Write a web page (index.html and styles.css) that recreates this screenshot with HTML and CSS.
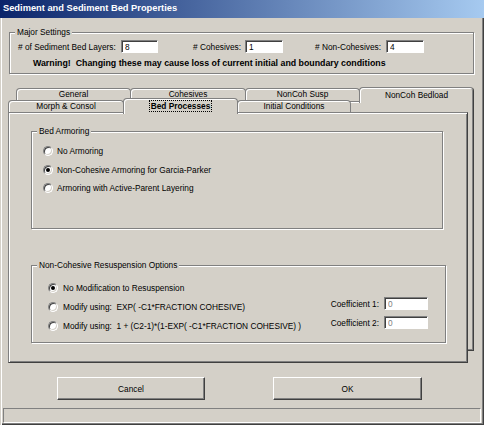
FILE: index.html
```html
<!DOCTYPE html>
<html lang="en">
<head>
    <meta charset="UTF-8">
    <title>Sediment and Sediment Bed Properties</title>
    <link rel="stylesheet" href="styles.css">
</head>
<body>
    <div class="window">
        <div class="titlebar">Sediment and Sediment Bed Properties</div>

        <div class="group major">
            <span class="group-title">Major Settings</span>
            <div class="settings-row">
                <span class="lbl lbl-layers"># of Sediment Bed Layers:</span>
                <input class="edit edit-layers" type="text" value="8">
                <span class="lbl lbl-coh"># Cohesives:</span>
                <input class="edit edit-coh" type="text" value="1">
                <span class="lbl lbl-noncoh"># Non-Cohesives:</span>
                <input class="edit edit-noncoh" type="text" value="4">
            </div>
            <div class="warning">Warning!&nbsp; Changing these may cause loss of current initial and boundary conditions</div>
        </div>

        <div class="tabs">
            <div class="tab-row back">
                <div class="tab t-general">General</div>
                <div class="tab t-coh">Cohesives</div>
                <div class="tab t-susp">NonCoh Susp</div>
                <div class="tab t-bedload">NonCoh Bedload</div>
            </div>
            <div class="tab-row front">
                <div class="tab t-morph">Morph &amp; Consol</div>
                <div class="tab t-bedproc active"><span class="focus">Bed Processes</span></div>
                <div class="tab t-init">Initial Conditions</div>
            </div>

            <div class="page">
                <div class="group armoring">
                    <span class="group-title">Bed Armoring</span>
                    <div class="option"><span class="radio"></span>No Armoring</div>
                    <div class="option"><span class="radio checked"></span>Non-Cohesive Armoring for Garcia-Parker</div>
                    <div class="option"><span class="radio"></span>Armoring with Active-Parent Layering</div>
                </div>

                <div class="group resusp">
                    <span class="group-title">Non-Cohesive Resuspension Options</span>
                    <div class="option"><span class="radio checked"></span>No Modification to Resuspension</div>
                    <div class="option">
                        <span class="radio"></span>Modify using:&nbsp; EXP( -C1*FRACTION COHESIVE)
                        <span class="coef"><span class="coef-lbl">Coefficient 1:</span><input class="edit edit-coef" type="text" value="0" disabled></span>
                    </div>
                    <div class="option">
                        <span class="radio"></span>Modify using:&nbsp; 1 + (C2-1)*(1-EXP( -C1*FRACTION COHESIVE) )
                        <span class="coef"><span class="coef-lbl">Coefficient 2:</span><input class="edit edit-coef" type="text" value="0" disabled></span>
                    </div>
                </div>
            </div>
        </div>

        <div class="buttons">
            <button class="btn btn-cancel">Cancel</button>
            <button class="btn btn-ok">OK</button>
        </div>

        <div class="statusbar"></div>
    </div>
</body>
</html>
```

FILE: styles.css
```css
* {
    box-sizing: border-box;
}
body {
    margin: 0;
    background-color: #d4d0c8;
    font-family: "Liberation Sans", Arial, sans-serif;
    font-size: 8.3px;
    color: #000;
}
.window {
    width: 484px;
    height: 425px;
    background-color: #d4d0c8;
    overflow: hidden;
    box-shadow: inset 1px 0 0 #d4d0c8, inset 2px 0 0 #fff, inset -1px -1px 0 #404040, inset -2px -2px 0 #808080;
}
.titlebar {
    height: 18px;
    padding-left: 3px;
    line-height: 17px;
    font-size: 9.3px;
    font-weight: bold;
    color: #fff;
    background: linear-gradient(to right, #0a246a, #a6caf0);
}

/* etched group boxes */
.group {
    position: relative;
    border: 1px solid #808080;
    box-shadow: 1px 1px 0 #fff, inset 1px 1px 0 #fff;
}
.group-title {
    position: absolute;
    top: -6px;
    left: 5px;
    padding: 0 2px;
    line-height: 10px;
    white-space: nowrap;
    background-color: #d4d0c8;
}
.major {
    margin: 14px 10px 0 9px;
    height: 42px;
}
.settings-row {
    display: flex;
    align-items: center;
    height: 13px;
    margin-top: 7px;
    padding-left: 8px;
}
.lbl {
    flex-shrink: 0;
    white-space: nowrap;
}
.lbl-layers { width: 103px; }
.lbl-coh { width: 52px; margin-left: 35px; }
.lbl-noncoh { width: 71px; margin-left: 32px; }
.edit {
    flex-shrink: 0;
    height: 13px;
    padding: 0 0 0 3px;
    border: 1px solid;
    border-color: #808080 #fff #fff #808080;
    box-shadow: inset 1px 1px 0 #404040;
    background-color: #fff;
    font: inherit;
    color: #000;
    outline: none;
}
.edit-layers { width: 37px; }
.edit-coh { width: 38px; }
.edit-noncoh { width: 38px; }
.warning {
    margin-top: 5px;
    padding-left: 23px;
    line-height: 10px;
    font-size: 8.8px;
    font-weight: bold;
    white-space: nowrap;
}

/* tab control */
.tabs {
    position: relative;
    margin: 13px 10px 0 8px;
    height: 276px;
}
.tabs::before {
    content: '';
    position: absolute;
    left: 8px;
    top: 14px;
    right: 0;
    bottom: 12px;
    border: 1px solid #808080;
    border-right-color: #404040;
    border-bottom-color: #404040;
    box-shadow: inset 1px 1px 0 #fff, inset -1px -1px 0 #808080;
}
.tab-row {
    position: relative;
    display: flex;
}
.tab-row.back {
    height: 14px;
    padding-left: 8px;
}
.tab-row.front {
    z-index: 2;
    height: 12px;
    margin-top: -1px;
}
.tab {
    position: relative;
    flex-shrink: 0;
    height: 13px;
    margin-right: -1px;
    border: 1px solid #808080;
    border-bottom: none;
    border-radius: 4px 4px 0 0;
    box-shadow: inset 1px 1px 0 #fff;
    background-color: #d4d0c8;
    text-align: center;
    line-height: 11px;
    white-space: nowrap;
}
.back .tab { margin-top: 1px; }
.t-general { width: 115px; }
.t-coh { width: 116px; }
.t-susp { width: 115px; }
.t-bedload {
    z-index: 1;
    width: 115px;
    height: 16px;
    line-height: 14px;
    border-right-color: #404040;
    box-shadow: inset 1px 1px 0 #fff, inset -1px 0 0 #808080;
}
.back .t-bedload { margin-top: 0; }
.t-morph { width: 116px; }
.t-bedproc { width: 115px; }
.t-init { width: 114px; }
.front .tab { height: 12px; line-height: 11px; }
.front .tab.active {
    z-index: 3;
    height: 16px;
    margin-top: -2px;
    padding-top: 2px;
    font-weight: bold;
}
.focus {
    padding: 0 1px;
    border: 1px dotted #000;
}
.page {
    position: relative;
    z-index: 1;
    width: 460px;
    height: 251px;
    padding-top: 1px;
    border: 1px solid #808080;
    border-right: 1px solid #404040;
    border-bottom: 1px solid #404040;
    box-shadow: inset 1px 1px 0 #fff, inset -1px -1px 0 #808080;
    background-color: #d4d0c8;
    overflow: hidden;
}

/* option groups on the page */
.armoring {
    width: 412px;
    height: 98px;
    margin: 17px 0 0 22px;
    padding: 10px 0 0 11px;
}
.resusp {
    width: 415px;
    height: 78px;
    margin: 36px 0 0 22px;
    padding: 12px 17px 0 16px;
}
.option {
    display: flex;
    align-items: center;
    height: 18.5px;
    white-space: nowrap;
}
.resusp .option { height: 19px; }
.radio {
    display: grid;
    place-items: center;
    flex-shrink: 0;
    width: 10px;
    height: 10px;
    margin-right: 4px;
    border: 1px solid;
    border-color: #808080 #fff #fff #808080;
    border-radius: 50%;
    box-shadow: inset 1px 1px 0 #404040, inset -1px -1px 0 #d4d0c8;
    background-color: #fff;
}
.resusp .radio { margin-right: 5px; }
.radio.checked::after {
    content: '';
    width: 4px;
    height: 4px;
    border-radius: 50%;
    background-color: #000;
}
.coef {
    display: flex;
    align-items: center;
    margin-left: auto;
    margin-bottom: 6px;
}
.coef-lbl { margin-right: 5px; }
.edit-coef {
    width: 44px;
    color: #808080;
}

.buttons {
    display: flex;
    gap: 68px;
    margin-top: 14px;
    padding-left: 57px;
}
.btn {
    width: 148px;
    height: 23px;
    padding: 0;
    border: 1px solid;
    border-color: #fff #404040 #404040 #fff;
    box-shadow: inset -1px -1px 0 #808080;
    background-color: #d4d0c8;
    font: inherit;
    color: #000;
}
.btn-ok { width: 149px; }
.statusbar {
    height: 15px;
    margin: 8px 3px 0 3px;
    border: 1px solid;
    border-color: #808080 #fff #fff #808080;
}
```
